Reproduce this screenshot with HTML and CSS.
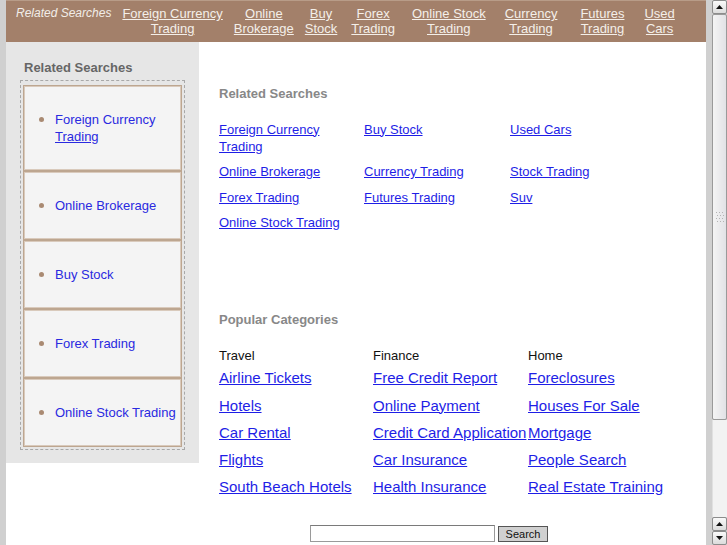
FILE: index.html
```html
<!DOCTYPE html>
<html>
<head>
<meta charset="utf-8">
<title>Related Searches</title>
<link rel="stylesheet" href="styles.css">
</head>
<body>
<div class="page">
  <div class="topbar">
    <span class="top-label">Related Searches</span>
    <a class="top-link" href="#">Foreign Currency<br>Trading</a>
    <a class="top-link" href="#">Online<br>Brokerage</a>
    <a class="top-link" href="#">Buy<br>Stock</a>
    <a class="top-link gap-14" href="#">Forex<br>Trading</a>
    <a class="top-link gap-17" href="#">Online Stock<br>Trading</a>
    <a class="top-link gap-19" href="#">Currency<br>Trading</a>
    <a class="top-link gap-23" href="#">Futures<br>Trading</a>
    <a class="top-link gap-20" href="#">Used<br>Cars</a>
  </div>
  <div class="body-row">
    <div class="sidebar">
      <div class="side-title">Related Searches</div>
      <ul class="side-list">
        <li class="side-item"><a href="#">Foreign Currency <span class="ul">Trading</span></a></li>
        <li class="side-item"><a href="#">Online Brokerage</a></li>
        <li class="side-item"><a href="#">Buy Stock</a></li>
        <li class="side-item"><a href="#">Forex Trading</a></li>
        <li class="side-item"><a href="#">Online Stock Trading</a></li>
      </ul>
    </div>
    <div class="main">
      <h2 class="sec-title">Related Searches</h2>
      <div class="rel-grid">
        <a href="#">Foreign Currency<br>Trading</a>
        <a href="#">Buy Stock</a>
        <a href="#">Used Cars</a>
        <a href="#">Online Brokerage</a>
        <a href="#">Currency Trading</a>
        <a href="#">Stock Trading</a>
        <a href="#">Forex Trading</a>
        <a href="#">Futures Trading</a>
        <a href="#">Suv</a>
        <a href="#">Online Stock Trading</a>
      </div>
      <h2 class="sec-title pop-title">Popular Categories</h2>
      <div class="pop-grid">
        <div class="pop-col">
          <div class="pop-head">Travel</div>
          <a href="#">Airline Tickets</a>
          <a href="#">Hotels</a>
          <a href="#">Car Rental</a>
          <a href="#">Flights</a>
          <a href="#">South Beach Hotels</a>
        </div>
        <div class="pop-col">
          <div class="pop-head">Finance</div>
          <a href="#">Free Credit Report</a>
          <a href="#">Online Payment</a>
          <a href="#">Credit Card Application</a>
          <a href="#">Car Insurance</a>
          <a href="#">Health Insurance</a>
        </div>
        <div class="pop-col">
          <div class="pop-head">Home</div>
          <a href="#">Foreclosures</a>
          <a href="#">Houses For Sale</a>
          <a href="#">Mortgage</a>
          <a href="#">People Search</a>
          <a href="#">Real Estate Training</a>
        </div>
      </div>
      <form class="search" onsubmit="return false">
        <input class="search-input" type="text">
        <button class="search-btn" type="submit">Search</button>
      </form>
    </div>
  </div>
</div>
<div class="scrollbar" aria-hidden="true">
  <div class="sb-btn"><svg width="7" height="4" viewBox="0 0 7 4"><path d="M0 4 L3.5 0 L7 4 Z" fill="#111"/></svg></div>
  <div class="sb-thumb">
    <svg class="sb-grip" width="8" height="10" viewBox="0 0 8 10">
      <g fill="#b4b4b4">
        <rect x="0" y="0" width="1" height="1"/><rect x="3" y="0" width="1" height="1"/><rect x="6" y="0" width="1" height="1"/>
        <rect x="1" y="3" width="1" height="1"/><rect x="4" y="3" width="1" height="1"/><rect x="7" y="3" width="1" height="1"/>
        <rect x="0" y="6" width="1" height="1"/><rect x="3" y="6" width="1" height="1"/><rect x="6" y="6" width="1" height="1"/>
        <rect x="1" y="9" width="1" height="1"/><rect x="4" y="9" width="1" height="1"/><rect x="7" y="9" width="1" height="1"/>
      </g>
    </svg>
  </div>
  <div class="sb-track"></div>
  <div class="sb-btn"><svg width="7" height="4" viewBox="0 0 7 4"><path d="M0 4 L3.5 0 L7 4 Z" fill="#111"/></svg></div>
  <div class="sb-btn"><svg width="7" height="4" viewBox="0 0 7 4"><path d="M0 0 L3.5 4 L7 0 Z" fill="#111"/></svg></div>
</div>
</body>
</html>
```
FILE: styles.css
```css
html, body {
  margin: 0;
  padding: 0;
}
body {
  background: #d0d0d0;
  font-family: "Liberation Sans", Arial, sans-serif;
  font-size: 13px;
}
.page {
  width: 700px;
  margin: 0 0 0 6px;
  background: #ffffff;
  padding-bottom: 120px;
}
.topbar {
  background: #a3806a;
  border-top: 1px solid #b89c88;
  height: 42px;
  box-sizing: border-box;
  display: flex;
  align-items: flex-start;
  padding: 5px 0 0 10px;
  line-height: 15px;
}
.top-label {
  font-style: italic;
  font-size: 12px;
  color: #f2ede8;
}
.top-link {
  margin-left: 11px;
  color: #f4efe9;
  text-align: center;
  text-decoration: underline;
}
.gap-14 { margin-left: 14px; }
.gap-17 { margin-left: 17px; }
.gap-19 { margin-left: 19px; }
.gap-23 { margin-left: 23px; }
.gap-20 { margin-left: 20px; }
.body-row {
  display: flex;
  align-items: flex-start;
}
.sidebar {
  width: 193px;
  flex: none;
  background: #e6e6e6;
  padding: 18px 0 13px 14px;
  box-sizing: border-box;
}
.side-title {
  font-weight: bold;
  color: #666666;
  font-size: 13px;
  line-height: 16px;
  padding-left: 4px;
  margin-bottom: 4px;
}
.side-list {
  list-style: none;
  margin: 0;
  width: 165px;
  box-sizing: border-box;
  border: 1px dashed #a8a8a8;
  padding: 4px 2px 2px 2px;
}
.side-item {
  position: relative;
  background: #f4f4f4;
  border: 1px solid #bda690;
  box-shadow: inset 0 0 0 1px #d9cabc;
  padding: 25px 4px 25px 31px;
  line-height: 17px;
}
.side-item::before {
  content: "";
  position: absolute;
  left: 15px;
  top: 31px;
  width: 5px;
  height: 5px;
  border-radius: 50%;
  background: #a98a72;
}
.side-item a {
  color: #2a2ae0;
  text-decoration: none;
}
.side-item .ul {
  text-decoration: underline;
}
.main {
  flex: 1;
  padding: 44px 0 0 20px;
}
.sec-title {
  margin: 0;
  font-size: 13px;
  line-height: 16px;
  font-weight: bold;
  color: #888888;
}
.rel-grid {
  margin-top: 18.5px;
  display: grid;
  grid-template-columns: 145px 146px 146px;
  row-gap: 8.5px;
  line-height: 17px;
}
.rel-grid a, .pop-col a {
  color: #1e1ee6;
  text-decoration: underline;
}
.pop-title {
  margin-top: 81px;
}
.pop-grid {
  margin-top: 20px;
  display: grid;
  grid-template-columns: 154px 155px 155px;
}
.pop-col {
  display: flex;
  flex-direction: column;
  align-items: flex-start;
  row-gap: 9.3px;
  font-size: 15px;
  line-height: 18px;
}
.pop-head {
  font-size: 13px;
  line-height: 16px;
  color: #111111;
  margin-bottom: -4px;
}
.search {
  margin: 28.5px 0 0 91px;
  display: flex;
  align-items: flex-start;
  gap: 3px;
}
.search-input {
  width: 185px;
  height: 17px;
  box-sizing: border-box;
  border: 1px solid #9a9a9a;
  border-top-color: #7a7a7a;
  padding: 0 2px;
  margin: 0;
  background: #fff;
}
.search-btn {
  width: 50px;
  height: 16px;
  margin: 1px 0 0 0;
  padding: 0;
  box-sizing: border-box;
  border: 1px solid #555;
  background: #d0d0d0;
  font-family: "Liberation Sans", Arial, sans-serif;
  font-size: 11px;
  line-height: 14px;
  color: #111;
}
.scrollbar {
  position: fixed;
  top: 0;
  right: 0;
  width: 16px;
  height: 100vh;
  background: #d0d0d0;
  display: flex;
  flex-direction: column;
  padding-left: 1px;
  box-sizing: border-box;
}
.sb-btn {
  height: 14px;
  flex: none;
  box-sizing: border-box;
  border: 1px solid #8c8c8c;
  border-radius: 2px;
  background: linear-gradient(#fafafa, #dcdcdc);
  display: flex;
  align-items: center;
  justify-content: center;
}
.sb-thumb {
  height: 406px;
  flex: none;
  box-sizing: border-box;
  border: 1px solid #9a9a9a;
  border-radius: 2px;
  background: linear-gradient(90deg, #f4f4f4, #e2e2e6);
  display: flex;
  align-items: center;
  justify-content: center;
}
.sb-track {
  flex: 1;
  background: #f2f2f2;
  border-left: 1px solid #e0e0e0;
}
```
